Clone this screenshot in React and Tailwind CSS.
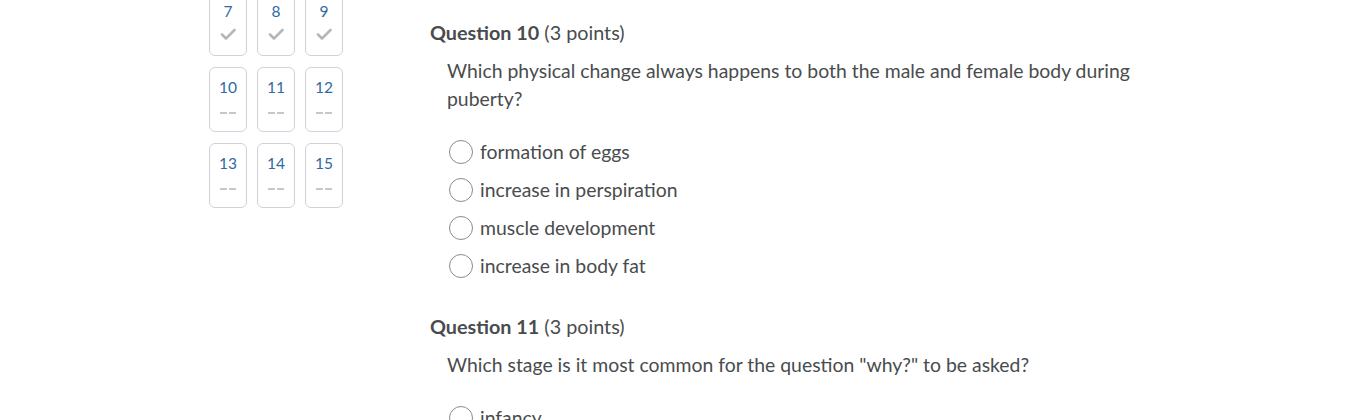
const tiles = [
  { n: 7, done: true },
  { n: 8, done: true },
  { n: 9, done: true },
  { n: 10 },
  { n: 11 },
  { n: 12 },
  { n: 13 },
  { n: 14 },
  { n: 15 },
];

function Tile({ n, done }) {
  return (
    <div className="w-[38px] h-[65px] rounded-[6px] border border-[#cdd3d9] bg-white flex flex-col items-center pt-[9px]">
      <span className="text-[15.5px] leading-[20px] text-[#2f6aa3]">{n}</span>
      {done ? (
        <svg width="18" height="14" viewBox="0 0 18 14" className="mt-[6px]">
          <path d="M3 7.5 L7 11.5 L15.5 3" fill="none" stroke="#b4b8bc" strokeWidth="2.6" strokeLinecap="round" strokeLinejoin="round" />
        </svg>
      ) : (
        <div className="flex gap-[2px] mt-[15px]">
          <div className="w-[7px] h-[2px] bg-[#c4c8cc]" />
          <div className="w-[7px] h-[2px] bg-[#c4c8cc]" />
        </div>
      )}
    </div>
  );
}

function Option({ label }) {
  return (
    <div className="flex items-center h-[38px]">
      <div className="w-[24px] h-[24px] rounded-full border border-[#868c92] bg-white ml-[2px] mr-[7px]" />
      <span className="text-[19.4px] text-[#494c4e]">{label}</span>
    </div>
  );
}

function Question({ num, text, options }) {
  return (
    <div>
      <h3 className="text-[19.8px] leading-[28px] text-[#494c4e]">
        <span className="font-bold">Question {num}</span> (3 points)
      </h3>
      <p className="ml-[17px] mt-[11px] w-[700px] text-[19.4px] leading-[28px] text-[#494c4e]">{text}</p>
      <div className="ml-[17px] mt-[20px]">
        {options.map((o) => (
          <Option key={o} label={o} />
        ))}
      </div>
    </div>
  );
}

export default function App() {
  return (
    <div className="h-[420px] overflow-hidden bg-white flex pl-[209px]" style={{ fontFamily: "Lato, 'Open Sans', sans-serif" }}>
      <div className="grid grid-cols-3 gap-x-[10px] gap-y-[11px] mt-[-9px] self-start">
        {tiles.map((t) => (
          <Tile key={t.n} {...t} />
        ))}
      </div>
      <div className="ml-[87px] pt-[18px] flex flex-col gap-[27px]">
        <Question
          num={10}
          text="Which physical change always happens to both the male and female body during puberty?"
          options={["formation of eggs", "increase in perspiration", "muscle development", "increase in body fat"]}
        />
        <Question
          num={11}
          text={'Which stage is it most common for the question "why?" to be asked?'}
          options={["infancy", "early childhood", "middle childhood", "adolescence"]}
        />
      </div>
    </div>
  );
}
